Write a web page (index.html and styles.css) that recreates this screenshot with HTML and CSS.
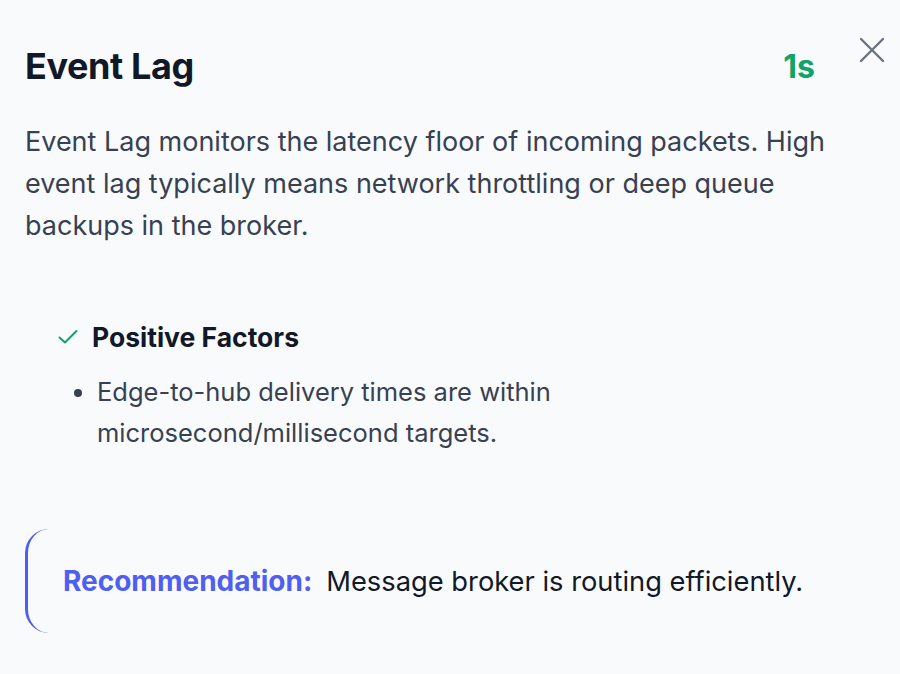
FILE: index.html
```html
<!DOCTYPE html>
<html>
<head>
<meta charset="utf-8">
<link rel="stylesheet" href="styles.css">
</head>
<body>
<div class="panel">
  <button class="close" aria-label="Close">
    <svg width="26" height="26" viewBox="0 0 26 26"><path d="M2 2 L24 24 M24 2 L2 24" stroke="#6b7280" stroke-width="2.4" stroke-linecap="round"/></svg>
  </button>
  <div class="header">
    <h1 class="title">Event Lag</h1>
    <span class="value">1s</span>
  </div>
  <p class="desc">Event Lag monitors the latency floor of incoming packets. High event lag typically means network throttling or deep queue backups in the broker.</p>
  <div class="factors">
    <div class="factors-head">
      <svg class="check" width="20" height="16" viewBox="0 0 20 16"><path d="M1.5 8.5 L7 13.5 L18.5 2" fill="none" stroke="#10a36a" stroke-width="2" stroke-linecap="round" stroke-linejoin="round"/></svg>
      <span>Positive Factors</span>
    </div>
    <ul class="factor-list">
      <li>Edge-to-hub delivery times are within microsecond/millisecond targets.</li>
    </ul>
  </div>
  <div class="rec">
    <span class="rec-label">Recommendation:</span>
    <span class="rec-text">Message broker is routing efficiently.</span>
  </div>
</div>
</body>
</html>
```
FILE: styles.css
```css
html, body {
  margin: 0;
  padding: 0;
  background: #f9fafb;
  font-family: Inter, "Noto Sans", sans-serif;
}
.panel {
  position: relative;
  padding: 42px 85px 0 25px;
  width: 900px;
  box-sizing: border-box;
}
.close {
  position: absolute;
  top: 37px;
  right: 15px;
  background: none;
  border: 0;
  padding: 0;
  width: 26px;
  height: 26px;
}
.header {
  display: flex;
  justify-content: space-between;
  align-items: center;
}
.title {
  margin: 0;
  font-size: 36px;
  font-weight: 700;
  line-height: 48px;
  color: #111827;
  letter-spacing: -0.4px;
}
.value {
  font-size: 32px;
  font-weight: 700;
  color: #10a36a;
}
.desc {
  margin: 31px 0 0 0;
  font-size: 27px;
  line-height: 42px;
  color: #374151;
  width: 830px;
}
.factors {
  margin: 74px 0 0 33px;
}
.factors-head {
  display: flex;
  align-items: center;
  gap: 14px;
  font-size: 26.5px;
  font-weight: 700;
  color: #111827;
  line-height: 32px;
}
.factor-list {
  margin: 18px 0 0 0;
  padding-left: 39px;
  font-size: 25.5px;
  line-height: 41px;
  color: #374151;
  width: 560px;
}
.rec {
  margin-top: 76px;
  border-left: 3px solid #4f5ff0;
  border-radius: 24px 0 0 24px;
  height: 104px;
  display: flex;
  align-items: center;
  padding-left: 35px;
  font-size: 27.3px;
}
.rec-label {
  font-weight: 700;
  font-size: 28px;
  color: #4f5ff0;
  margin-right: 14px;
}
.rec-text {
  color: #111827;
}
```
